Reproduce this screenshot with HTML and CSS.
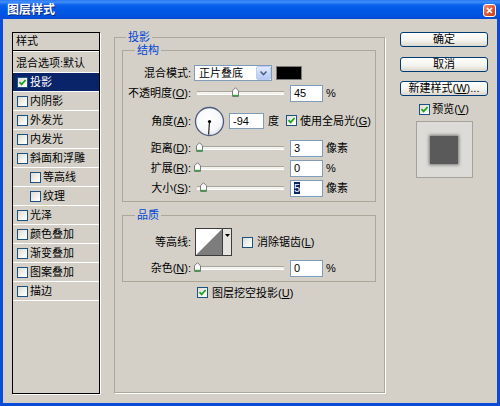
FILE: index.html
```html
<!DOCTYPE html>
<html lang="zh-CN">
<head>
<meta charset="utf-8">
<title>图层样式</title>
<link rel="stylesheet" href="styles.css">
</head>
<body>
<div class="win">
  <div class="titlebar">
    <span class="title">图层样式</span>
    <svg class="close" width="13" height="13" viewBox="0 0 13 13">
      <defs>
        <linearGradient id="cg" x1="0" y1="0" x2="1" y2="1">
          <stop offset="0" stop-color="#f0967a"/>
          <stop offset="0.5" stop-color="#e05a33"/>
          <stop offset="1" stop-color="#c0391a"/>
        </linearGradient>
      </defs>
      <rect x="0.5" y="0.5" width="12" height="12" rx="2.5" fill="url(#cg)" stroke="#fff"/>
      <path d="M4 4L9 9M9 4L4 9" stroke="#fff" stroke-width="1.7"/>
    </svg>
  </div>
  <div class="client">
    <div class="list">
      <div class="lh">样式</div>
      <div class="li">混合选项:默认</div>
      <div class="li sel"><span class="cb"><svg width="9" height="9" viewBox="0 0 9 9"><path d="M1.5 4.2L3.6 6.4L7.6 2" fill="none" stroke="#21a121" stroke-width="1.8"/></svg></span>投影</div>
      <div class="li"><span class="cb"></span>内阴影</div>
      <div class="li"><span class="cb"></span>外发光</div>
      <div class="li"><span class="cb"></span>内发光</div>
      <div class="li"><span class="cb"></span>斜面和浮雕</div>
      <div class="li sub-item"><span class="cb"></span>等高线</div>
      <div class="li sub-item"><span class="cb"></span>纹理</div>
      <div class="li"><span class="cb"></span>光泽</div>
      <div class="li"><span class="cb"></span>颜色叠加</div>
      <div class="li"><span class="cb"></span>渐变叠加</div>
      <div class="li"><span class="cb"></span>图案叠加</div>
      <div class="li"><span class="cb"></span>描边</div>
    </div>

    <fieldset class="gb main">
      <legend>投影</legend>
      <fieldset class="gb sub">
        <legend>结构</legend>
        <div class="row">
          <span class="lbl">混合模式:</span>
          <div class="select">
            <span class="seltext">正片叠底</span>
            <svg class="dd" width="15" height="14" viewBox="0 0 15 14">
              <defs>
                <linearGradient id="dg" x1="0" y1="0" x2="0" y2="1">
                  <stop offset="0" stop-color="#e3ebfd"/>
                  <stop offset="1" stop-color="#b3c8f4"/>
                </linearGradient>
              </defs>
              <rect x="0.5" y="0.5" width="14" height="13" rx="1.5" fill="url(#dg)" stroke="#bccdf3"/>
              <path d="M4.5 5.5L7.5 8.5L10.5 5.5" fill="none" stroke="#4d6185" stroke-width="1.6"/>
            </svg>
          </div>
          <span class="swatch"></span>
        </div>
        <div class="row">
          <span class="lbl">不透明度(<u>O</u>):</span>
          <div class="slider"><div class="track"><svg class="thumb" style="left:35px" width="7" height="10" viewBox="0 0 7 10"><path d="M0.5 3.8L3.5 0.7L6.5 3.8V9.5H0.5Z" fill="#fff" stroke="#7a7a7a"/><path d="M1 8.5H6" stroke="#2fa83a" stroke-width="1.4"/></svg></div></div>
          <span class="inp">45</span>
          <span class="unit">%</span>
        </div>
        <div class="row tall">
          <span class="lbl">角度(<u>A</u>):</span>
          <svg class="dial" width="31" height="31" viewBox="0 0 31 31">
            <defs>
              <radialGradient id="rg" cx="0.45" cy="0.4" r="0.65">
                <stop offset="0" stop-color="#ffffff"/>
                <stop offset="0.7" stop-color="#f6f7fa"/>
                <stop offset="1" stop-color="#d9dde6"/>
              </radialGradient>
            </defs>
            <circle cx="15.5" cy="15.5" r="14" fill="url(#rg)" stroke="#4e5b7a" stroke-width="1.3"/>
            <line x1="15.5" y1="15.5" x2="14.6" y2="28.5" stroke="#222" stroke-width="1.2"/>
            <circle cx="15.5" cy="15.5" r="1.6" fill="#000"/>
          </svg>
          <span class="inp wide">-94</span>
          <span class="unit deg">度</span>
          <span class="cb gcb"><svg width="9" height="9" viewBox="0 0 9 9"><path d="M1.5 4.2L3.6 6.4L7.6 2" fill="none" stroke="#21a121" stroke-width="1.8"/></svg></span>
          <span>使用全局光(<u>G</u>)</span>
        </div>
        <div class="row">
          <span class="lbl">距离(<u>D</u>):</span>
          <div class="slider"><div class="track"><svg class="thumb" style="left:-1px" width="7" height="10" viewBox="0 0 7 10"><path d="M0.5 3.8L3.5 0.7L6.5 3.8V9.5H0.5Z" fill="#fff" stroke="#7a7a7a"/><path d="M1 8.5H6" stroke="#2fa83a" stroke-width="1.4"/></svg></div></div>
          <span class="inp">3</span>
          <span class="unit">像素</span>
        </div>
        <div class="row">
          <span class="lbl">扩展(<u>R</u>):</span>
          <div class="slider"><div class="track"><svg class="thumb" style="left:-3px" width="7" height="10" viewBox="0 0 7 10"><path d="M0.5 3.8L3.5 0.7L6.5 3.8V9.5H0.5Z" fill="#fff" stroke="#7a7a7a"/><path d="M1 8.5H6" stroke="#2fa83a" stroke-width="1.4"/></svg></div></div>
          <span class="inp">0</span>
          <span class="unit">%</span>
        </div>
        <div class="row">
          <span class="lbl">大小(<u>S</u>):</span>
          <div class="slider"><div class="track"><svg class="thumb" style="left:3px" width="7" height="10" viewBox="0 0 7 10"><path d="M0.5 3.8L3.5 0.7L6.5 3.8V9.5H0.5Z" fill="#fff" stroke="#7a7a7a"/><path d="M1 8.5H6" stroke="#2fa83a" stroke-width="1.4"/></svg></div></div>
          <span class="inp"><span class="hl">5</span></span>
          <span class="unit">像素</span>
        </div>
      </fieldset>

      <fieldset class="gb sub q">
        <legend>品质</legend>
        <div class="row crow">
          <span class="lbl">等高线:</span>
          <svg class="contour" width="37" height="28" viewBox="0 0 37 28">
            <rect x="0.5" y="0.5" width="36" height="27" fill="#e6e4de" stroke="#3c3c3c"/>
            <rect x="1" y="1" width="26" height="26" fill="#fff"/>
            <polygon points="1,27 27,1 27,27" fill="#7d7d7d"/>
            <line x1="27.5" y1="1" x2="27.5" y2="27" stroke="#3c3c3c"/>
            <path d="M30 6H35L32.5 9Z" fill="#000"/>
          </svg>
          <span class="cb acb"></span>
          <span>消除锯齿(<u>L</u>)</span>
        </div>
        <div class="row nrow">
          <span class="lbl">杂色(<u>N</u>):</span>
          <div class="slider"><div class="track"><svg class="thumb" style="left:-3px" width="7" height="10" viewBox="0 0 7 10"><path d="M0.5 3.8L3.5 0.7L6.5 3.8V9.5H0.5Z" fill="#fff" stroke="#7a7a7a"/><path d="M1 8.5H6" stroke="#2fa83a" stroke-width="1.4"/></svg></div></div>
          <span class="inp">0</span>
          <span class="unit">%</span>
        </div>
      </fieldset>

      <div class="knock">
        <span class="cb kcb"><svg width="9" height="9" viewBox="0 0 9 9"><path d="M1.5 4.2L3.6 6.4L7.6 2" fill="none" stroke="#21a121" stroke-width="1.8"/></svg></span>
        <span>图层挖空投影(<u>U</u>)</span>
      </div>
    </fieldset>

    <div class="side">
      <div class="btn b1">确定</div>
      <div class="btn b2">取消</div>
      <div class="btn b3">新建样式(<u>W</u>)...</div>
      <div class="prev-row">
        <span class="cb pcb"><svg width="9" height="9" viewBox="0 0 9 9"><path d="M1.5 4.2L3.6 6.4L7.6 2" fill="none" stroke="#21a121" stroke-width="1.8"/></svg></span>
        <span>预览(<u>V</u>)</span>
      </div>
      <div class="preview"><div class="sq"></div></div>
    </div>
  </div>
</div>
</body>
</html>
```

FILE: styles.css
```css
html, body {
  margin: 0;
  padding: 0;
}
body {
  font-family: "Liberation Sans", "Noto Sans CJK SC", sans-serif;
  font-size: 11px;
  line-height: 14px;
  color: #000;
  background: #d4d0c8;
}
u {
  text-decoration: underline;
  text-underline-offset: 1px;
}

.win {
  width: 500px;
  height: 406px;
  display: flex;
  flex-direction: column;
  background: #0a4bd9;
  overflow: hidden;
}

.titlebar {
  height: 19px;
  flex: none;
  display: flex;
  align-items: center;
  justify-content: space-between;
  padding: 0 4px 0 7px;
  background: linear-gradient(#2a78f2 0, #3e8ffa 2px, #0b61ec 5px, #0058e6 10px, #0054e0 15px, #004bd6 19px);
}
.title {
  color: #fff;
  font-weight: bold;
  font-size: 12px;
  line-height: 14px;
  text-shadow: 1px 1px 0 #0b2a80;
}
.close {
  display: block;
  margin-top: 2px;
}

.client {
  flex: 1;
  margin: 0 3px 3px 3px;
  background: #d4d0c8;
  display: flex;
  align-items: flex-start;
  padding: 11px 0 0 9px;
}

/* style list */
.list {
  width: 88px;
  height: 362px;
  margin-top: 2px;
  box-sizing: border-box;
  border: 1px solid #000;
  box-shadow: 1px 1px 0 #fff;
  flex: none;
}
.lh {
  height: 17px;
  line-height: 17px;
  padding-left: 3px;
  border-bottom: 1px solid #000;
  margin-bottom: 3px;
  box-shadow: 0 1px 0 #fff;
}
.li {
  height: 18px;
  border-bottom: 1px solid #fff;
  display: flex;
  align-items: center;
  padding-left: 3px;
  white-space: nowrap;
}
.li .cb {
  margin-left: 1px;
  margin-right: 2px;
}
.li.sub-item .cb {
  margin-left: 14px;
}
.li.sel {
  background: #0a246a;
  color: #fff;
}

.cb {
  width: 11px;
  height: 11px;
  box-sizing: border-box;
  border: 1px solid #1c5180;
  background: linear-gradient(135deg, #dcdcd5, #f7f7f4 70%, #fff);
  flex: none;
  display: flex;
  align-items: center;
  justify-content: center;
}
.cb svg {
  display: block;
}

/* group boxes */
.gb {
  margin: 0;
  padding: 0;
  min-width: 0;
  box-sizing: border-box;
  border: 1px solid #aca899;
}
.gb > legend {
  padding: 0 2px;
  margin-left: 11px;
  line-height: 14px;
  color: #0046d5;
}
.main {
  width: 271px;
  height: 363px;
  margin-left: 14px;
  flex: none;
  box-shadow: 1px 1px 0 #fff;
}
.sub {
  margin: -1px 8px 0 7px;
  padding: 6px 0 3px 0;
}
.sub > legend {
  margin-left: 12px;
}
.q {
  margin-top: 6px;
  padding: 6px 0 3px 0;
}

.row {
  display: flex;
  align-items: center;
  height: 20px;
  white-space: nowrap;
}
.row.tall {
  height: 35px;
}
.lbl {
  width: 68px;
  flex: none;
  text-align: right;
}

.select {
  margin-left: 3px;
  width: 78px;
  height: 16px;
  box-sizing: border-box;
  border: 1px solid #7f9db9;
  background: #fff;
  display: flex;
  align-items: center;
}
.seltext {
  padding-left: 4px;
}
.dd {
  display: block;
  margin-left: auto;
}
.swatch {
  margin-left: 4px;
  width: 26px;
  height: 14px;
  box-sizing: border-box;
  background: #000;
  border: 1px solid #7a7a7a;
}

.slider {
  margin-left: 3px;
  width: 93px;
  padding: 0 3px;
  box-sizing: border-box;
  flex: none;
  display: flex;
  align-items: center;
  height: 14px;
}
.track {
  flex: 1;
  height: 2px;
  border-top: 1px solid #a9a69c;
  border-bottom: 1px solid #fff;
  background: #f2f1ed;
  position: relative;
}
.thumb {
  position: absolute;
  top: -5px;
  display: block;
}

.inp {
  margin-left: 3px;
  width: 33px;
  height: 17px;
  box-sizing: border-box;
  border: 1px solid #7f9db9;
  background: #fff;
  padding-left: 3px;
  line-height: 15px;
  flex: none;
}
.inp.wide {
  width: 35px;
  height: 16px;
  margin-left: 4px;
}
.hl {
  background: #0a246a;
  color: #fff;
}
.unit {
  margin-left: 3px;
}
.unit.deg {
  margin-left: 4px;
}
.dial {
  display: block;
  margin-left: 3px;
  margin-top: 1px;
}
.gcb {
  margin-left: 7px;
  margin-right: 3px;
}

.crow {
  height: 28px;
}
.contour {
  display: block;
  margin-left: 4px;
}
.acb {
  margin-left: 10px;
  margin-right: 4px;
}
.nrow {
  margin-top: 2px;
}

.knock {
  height: 21px;
  display: flex;
  align-items: center;
  padding-left: 82px;
  white-space: nowrap;
}
.kcb {
  margin-right: 4px;
}

/* right column */
.side {
  width: 88px;
  margin-left: 15px;
  flex: none;
  display: flex;
  flex-direction: column;
  align-items: center;
}
.btn {
  width: 88px;
  height: 15px;
  box-sizing: border-box;
  border: 1px solid #003c74;
  border-radius: 3px;
  background: linear-gradient(#ffffff, #f5f4ef 55%, #dcd8ce);
  text-align: center;
  line-height: 13px;
  white-space: nowrap;
}
.b1 {
  margin-top: 2px;
}
.b2 {
  margin-top: 10px;
}
.b3 {
  margin-top: 9px;
}
.prev-row {
  margin-top: 6px;
  height: 14px;
  display: flex;
  align-items: center;
  white-space: nowrap;
}
.pcb {
  margin-right: 2px;
}
.preview {
  margin-top: 5px;
  width: 57px;
  height: 57px;
  box-sizing: border-box;
  border: 1px solid #a5a29a;
  background: #dcdbd8;
  display: flex;
  align-items: center;
  justify-content: center;
}
.sq {
  width: 28px;
  height: 28px;
  background: #5a5a5a;
  box-shadow: 0 0 3px 1px rgba(40, 40, 40, 0.55);
}
```
